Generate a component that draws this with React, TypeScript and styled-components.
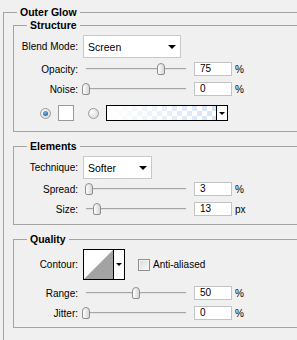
import React from 'react';
import styled, { createGlobalStyle } from 'styled-components';

const GlobalStyle = createGlobalStyle`
  html, body {
    margin: 0;
    padding: 0;
    background: #f0f0f0;
  }
  body {
    font-family: "Liberation Sans", Arial, sans-serif;
    font-size: 10px;
    color: #000;
  }
  #root {
    width: 297px;
    height: 340px;
    overflow: hidden;
  }
`;

const Panel = styled.fieldset`
  box-sizing: border-box;
  width: 340px;
  margin: 6px 0 0 3px;
  padding: 0 0 40px 9px;
  border: 1px solid #a3a3a3;
  min-inline-size: auto;
`;

const Legend = styled.legend<{ $offset: number }>`
  margin-left: ${p => p.$offset}px;
  padding: 0 3px;
  font-size: 10.5px;
  font-weight: bold;
  line-height: 13px;
`;

const Group = styled.fieldset<{ $pb: number }>`
  margin: 0;
  padding: 3px 0 ${p => p.$pb}px 0;
  border: 1px solid #a3a3a3;
  min-inline-size: auto;

  & + & {
    margin-top: 8px;
  }
`;

const Row = styled.div<{ $h: number; $mt?: number }>`
  display: flex;
  align-items: center;
  height: ${p => p.$h}px;
  margin-top: ${p => p.$mt ?? 0}px;
`;

const Label = styled.span`
  flex-shrink: 0;
  width: 64px;
  margin-right: 5px;
  text-align: right;
  white-space: nowrap;
`;

const Select = styled.div<{ $w: number }>`
  box-sizing: border-box;
  display: flex;
  align-items: center;
  justify-content: space-between;
  width: ${p => p.$w}px;
  height: 23px;
  padding: 0 4px 0 4px;
  background: #fff;
  border: 1px solid #c9c9c9;
  font-size: 10.5px;
`;

const Arrow = styled.span`
  width: 0;
  height: 0;
  border-left: 4px solid transparent;
  border-right: 4px solid transparent;
  border-top: 4px solid #000;
`;

const SliderArea = styled.div`
  position: relative;
  flex-shrink: 0;
  box-sizing: border-box;
  width: 111px;
  height: 20px;
  padding: 0 8px 0 3px;
  display: flex;
  align-items: center;
`;

const Track = styled.div`
  width: 100%;
  height: 1px;
  background: #a6a6a6;
  border-bottom: 1px solid #e2e2e2;
`;

const Thumb = styled.div`
  position: absolute;
  top: 4px;
  box-sizing: border-box;
  width: 8px;
  height: 12px;
  background: linear-gradient(to right, #ffffff, #d6d6d6);
  border: 1px solid #8d8d8d;
  border-radius: 4px 4px 2px 2px;
`;

const ValueBox = styled.div`
  box-sizing: border-box;
  flex-shrink: 0;
  width: 38px;
  height: 14px;
  padding-left: 5px;
  line-height: 12px;
  background: #fff;
  border: 1px solid #c3c3c3;
`;

const Unit = styled.span`
  margin-left: 3px;
`;

const Radio = styled.span<{ $checked?: boolean }>`
  box-sizing: border-box;
  display: flex;
  align-items: center;
  justify-content: center;
  width: 11px;
  height: 11px;
  margin-left: ${p => (p.$checked ? 26 : 14)}px;
  border-radius: 50%;
  border: 1px solid #9b9b9b;
  background: radial-gradient(circle at 40% 35%, #ffffff, #d2d2d2);

  &::after {
    content: '';
    display: ${p => (p.$checked ? 'block' : 'none')};
    width: 5px;
    height: 5px;
    border-radius: 50%;
    background: radial-gradient(circle at 40% 35%, #6fb2e8, #114f8e);
  }
`;

const Swatch = styled.span`
  box-sizing: border-box;
  width: 16px;
  height: 16px;
  margin-left: 7px;
  background: #fff;
  border: 1px solid #9a9a9a;
`;

const GradientPicker = styled.div`
  box-sizing: border-box;
  display: flex;
  width: 122px;
  height: 16px;
  margin-left: 7px;
  border: 1px solid #000;
  background: #fff;
`;

const GradientPreview = styled.div`
  flex: 1;
  background:
    linear-gradient(to right, #ffffff 0%, rgba(255, 255, 255, 0.35) 60%, rgba(255, 255, 255, 0) 100%),
    repeating-conic-gradient(#d6e4f7 0 25%, #ffffff 0 50%) 0 0 / 10px 10px;
`;

const DropButton = styled.div`
  display: flex;
  align-items: center;
  justify-content: center;
  width: 10px;
  border-left: 1px solid #000;
  background: #fff;
`;

const SmallArrow = styled.span`
  width: 0;
  height: 0;
  border-left: 3px solid transparent;
  border-right: 3px solid transparent;
  border-top: 3px solid #000;
`;

const ContourBox = styled.div`
  box-sizing: border-box;
  display: flex;
  width: 42px;
  height: 31px;
  border: 1px solid #000;
  background: #fff;

  svg {
    display: block;
  }
`;

const Checkbox = styled.span`
  box-sizing: border-box;
  width: 12px;
  height: 12px;
  margin-left: 13px;
  border: 1px solid #8f8f8f;
  background: linear-gradient(135deg, #d9d9d9, #fbfbfb);
  box-shadow: inset 0 0 0 1px #f4f4f4;
`;

const CheckLabel = styled.span`
  margin-left: 3px;
`;

const TRACK_PX = 100;

type SliderProps = { label: string; value: number; pos: number; unit: string };

const SliderRow: React.FC<SliderProps> = ({ label, value, pos, unit }) => (
  <Row $h={20}>
    <Label>{label}</Label>
    <SliderArea>
      <Track />
      <Thumb style={{ left: 3 + Math.round((pos / 100) * TRACK_PX) - 4 }} />
    </SliderArea>
    <ValueBox>{value}</ValueBox>
    <Unit>{unit}</Unit>
  </Row>
);

const App: React.FC = () => {
  return (
    <>
      <GlobalStyle />
      <Panel>
        <Legend $offset={4}>Outer Glow</Legend>

        <Group $pb={10}>
          <Legend $offset={13}>Structure</Legend>
          <Row $h={23}>
            <Label>Blend Mode:</Label>
            <Select $w={98}>
              Screen
              <Arrow />
            </Select>
          </Row>
          <Row $h={1} />
          <SliderRow label="Opacity:" value={75} pos={75} unit="%" />
          <SliderRow label="Noise:" value={0} pos={0} unit="%" />
          <Row $h={16} $mt={6}>
            <Radio $checked />
            <Swatch />
            <Radio />
            <GradientPicker>
              <GradientPreview />
              <DropButton>
                <SmallArrow />
              </DropButton>
            </GradientPicker>
          </Row>
        </Group>

        <Group $pb={5}>
          <Legend $offset={13}>Elements</Legend>
          <Row $h={23}>
            <Label>Technique:</Label>
            <Select $w={69}>
              Softer
              <Arrow />
            </Select>
          </Row>
          <SliderRow label="Spread:" value={3} pos={3} unit="%" />
          <SliderRow label="Size:" value={13} pos={11} unit="px" />
        </Group>

        <Group $pb={4}>
          <Legend $offset={13}>Quality</Legend>
          <Row $h={31}>
            <Label>Contour:</Label>
            <ContourBox>
              <svg width="29" height="29" viewBox="0 0 29 29">
                <polygon points="0,29 29,0 29,29" fill="#a3a3a3" />
              </svg>
              <DropButton>
                <SmallArrow />
              </DropButton>
            </ContourBox>
            <Checkbox />
            <CheckLabel>Anti-aliased</CheckLabel>
          </Row>
          <Row $h={3} />
          <SliderRow label="Range:" value={50} pos={50} unit="%" />
          <SliderRow label="Jitter:" value={0} pos={0} unit="%" />
        </Group>
      </Panel>
    </>
  );
};

export default App;
